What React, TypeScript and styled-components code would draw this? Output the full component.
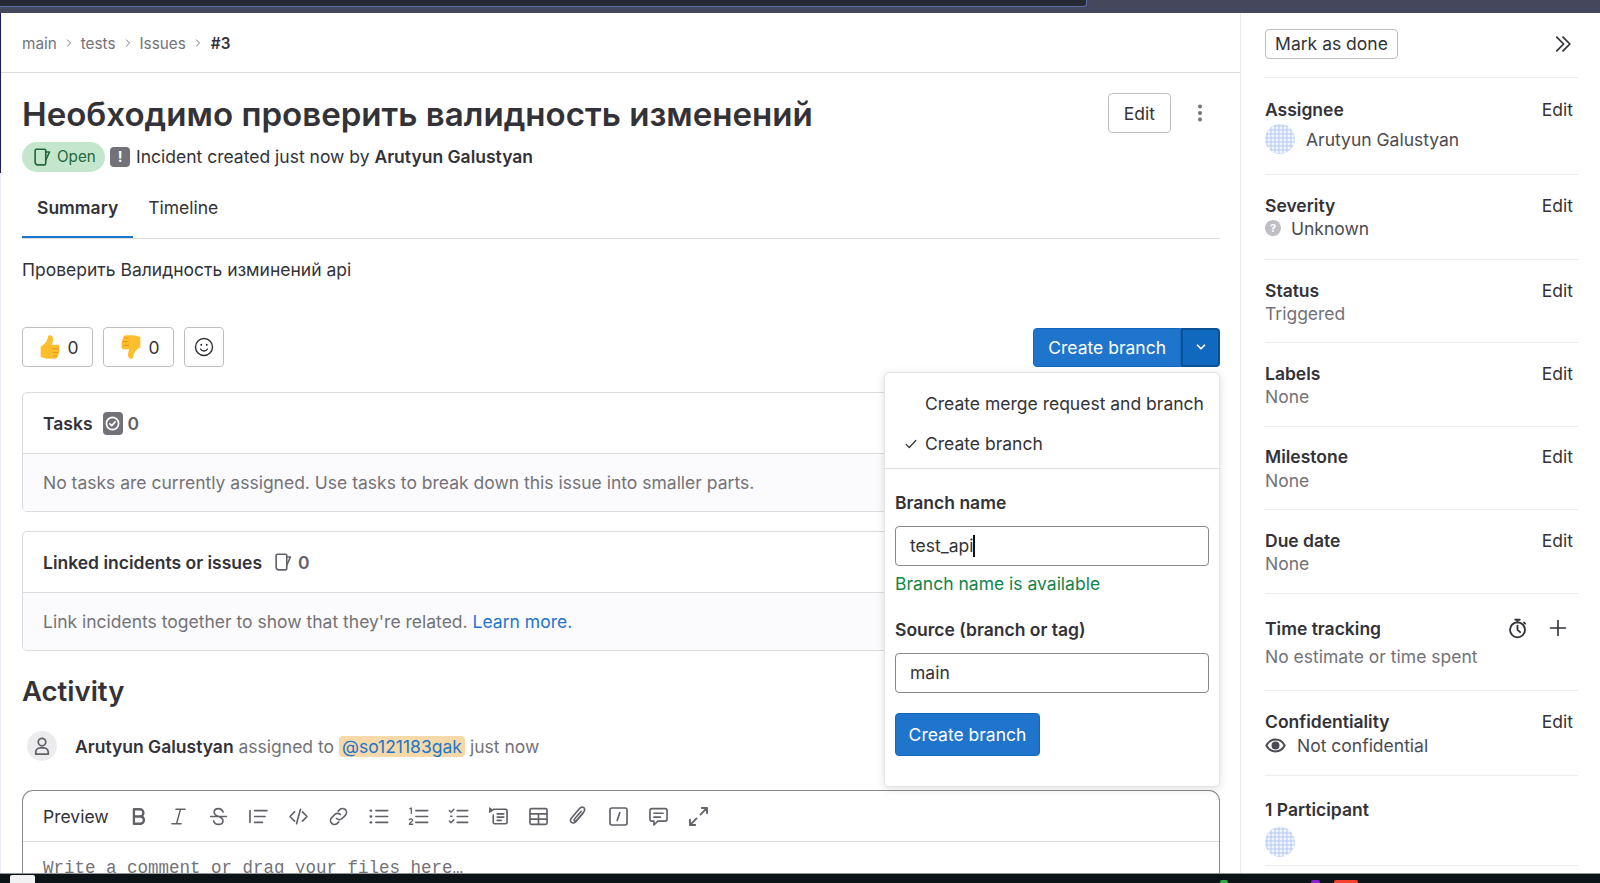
import React from "react";
import styled, { createGlobalStyle } from "styled-components";

const Global = createGlobalStyle`
  html, body { margin: 0; padding: 0; height: 100%; overflow: hidden; background: #fff; }
  #root { height: 100%; }
  * { box-sizing: border-box; }
  body { font-family: Inter, "Noto Sans", "Liberation Sans", sans-serif; font-size: 17.5px; color: #333238; }
`;

const Screen = styled.div`
  height: 883px; width: 1600px; display: flex; flex-direction: column; overflow: hidden;
`;
const TopStrip = styled.div`
  height: 13px; flex: none; background: #45485c;
`;
const TopTab = styled.div`
  width: 1087px; height: 7px; background: #262833;
  border-bottom: 1px solid #5a70ab; border-right: 1px solid #5a70ab; border-bottom-right-radius: 4px;
`;
const Body = styled.div`
  flex: 1; min-height: 0; display: flex; overflow: hidden;
`;
const Taskbar = styled.div`
  flex: none; height: 10px; background: #0b1316; border-top: 1px solid #8f9394;
  display: flex; align-items: flex-end;
`;
const TrayMark = styled.span<{ $w: number; $c: string; $ml: number; $h?: number }>`
  width: ${p => p.$w}px; height: ${p => p.$h ?? 3}px; margin-left: ${p => p.$ml}px; background: ${p => p.$c};
  border-radius: 2px 2px 0 0; flex: none;
`;

const Main = styled.main`
  position: relative; width: 1241px; flex: none; padding: 0 20px 0 21px;
  border-right: 1px solid #ececef; border-left: 1px solid #eaeaf8;
  &::before { content: ""; position: absolute; left: -1px; top: 0; width: 1px; height: 160px; background: #1e1d5e; }
`;
const Crumbs = styled.nav`
  height: 60px; margin: 0 -20px 0 -21px; padding: 1px 0 0 21px; border-bottom: 1px solid #dcdcde;
  display: flex; align-items: center; gap: 7px; font-size: 15.3px; color: #737278;
`;
const CrumbCurrent = styled.b`
  font-weight: 600; color: #333238; margin-left: 1px;
`;
const TitleRow = styled.div`
  margin-top: 20px; height: 40px; display: flex; align-items: center; justify-content: space-between;
`;
const Title = styled.h1`
  margin: 2px 0 0; font-size: 33.1px; line-height: 40px; font-weight: 600; color: #333238;
`;
const TitleActions = styled.div`
  display: flex; align-items: center; gap: 21px; padding-right: 12px;
`;
const Button = styled.button`
  font: inherit; font-size: 17.5px; color: #333238; background: #fff; border: 1px solid #bfbfc3; border-radius: 4px;
  height: 40px; padding: 0 15px; display: inline-flex; align-items: center; justify-content: center; gap: 8px;
`;
const StatusRow = styled.div`
  margin-top: 9px; height: 29px; display: flex; align-items: center;
`;
const Badge = styled.span`
  height: 30px; width: 83px; background: #c3e6cd; color: #24663b; border-radius: 15px; font-size: 15.2px;
  display: inline-flex; align-items: center; padding-left: 10px; gap: 5px;
`;
const AlertChip = styled.span`
  width: 20px; height: 20px; background: #737278; color: #fff; border-radius: 4px; font-weight: 700; font-size: 14px;
  display: inline-flex; align-items: center; justify-content: center; margin: 0 6px 0 5px;
`;
const Strong = styled.b`
  font-weight: 600; color: #333238;
`;
const Tabs = styled.div`
  margin-top: 5px; height: 63px; display: flex; border-bottom: 1px solid #dcdcde;
`;
const Tab = styled.div<{ $active?: boolean }>`
  padding: 0 15px; display: flex; align-items: center; height: 62px;
  font-weight: ${p => (p.$active ? 600 : 400)};
  box-shadow: ${p => (p.$active ? "inset 0 -2px 0 #1f75cb" : "none")};
`;
const Description = styled.p`
  margin: 19px 0 0; line-height: 24px;
`;
const ActionRow = styled.div`
  margin-top: 45px; height: 40px; display: flex; align-items: center; gap: 10px;
`;
const AwardButton = styled(Button)`
  width: 71px; padding: 0; gap: 3px;
`;
const SmileButton = styled(Button)`
  width: 40px; padding: 0;
`;
const SplitWrap = styled.div`
  margin-left: auto; position: relative; display: flex; height: 39px;
`;
const PrimaryButton = styled.button`
  font: inherit; font-size: 17.5px; color: #fff; background: #1f75cb; border: 1px solid #1068bf; height: 100%;
  padding: 0 14px; border-radius: 4px 0 0 4px;
`;
const CaretButton = styled.button`
  width: 39px; height: 100%; background: #1068bf; border: 2px solid #0b5196; border-radius: 0 4px 4px 0; color: #fff;
  display: flex; align-items: center; justify-content: center; padding: 0;
`;
const Menu = styled.div`
  position: absolute; top: 44px; right: 0; width: 336px; height: 415px; background: #fff; z-index: 2;
  border: 1px solid #e5e5e8; border-radius: 5px; box-shadow: 0 2px 8px rgba(0,0,0,.13);
`;
const MenuOptions = styled.div`
  height: 96px; padding-top: 11px; border-bottom: 1px solid #dcdcde;
`;
const MenuOption = styled.div`
  height: 40px; display: flex; align-items: center; padding-left: 40px; position: relative; white-space: nowrap;
`;
const MenuCheck = styled.span`
  position: absolute; left: 19px; top: 13px; display: flex;
`;
const MenuForm = styled.div`
  padding: 22px 10px 0;
`;
const FieldLabel = styled.div`
  font-weight: 600; line-height: 24px;
`;
const TextField = styled.div`
  margin-top: 11px; height: 40px; border: 1px solid #89888d; border-radius: 4px; padding: 0 14px;
  display: flex; align-items: center;
`;
const Caret = styled.span`
  display: inline-block; width: 1.5px; height: 22px; background: #111;
`;
const Available = styled.div`
  margin-top: 6px; color: #108548; line-height: 24px; margin-bottom: 22px;
`;
const MenuSubmit = styled.button`
  margin-top: 20px; font: inherit; font-size: 17.5px; color: #fff; background: #1f75cb; border: 1px solid #1068bf;
  height: 43px; width: 145px; border-radius: 4px; padding: 0;
`;
const Card = styled.section<{ $gap: number }>`
  margin-top: ${p => p.$gap}px; border: 1px solid #dcdcde; border-radius: 5px; overflow: hidden;
`;
const CardHead = styled.div`
  height: 61px; padding-left: 20px; display: flex; align-items: center; font-weight: 600; color: #333238;
  border-bottom: 1px solid #dcdcde;
`;
const CardCount = styled.span<{ $gap: number }>`
  display: inline-flex; align-items: center; gap: 5px; margin-left: ${p => p.$gap}px; color: #626168;
`;
const CardBody = styled.div`
  height: 57px; padding-left: 20px; display: flex; align-items: center; background: #fbfafd; color: #737278;
`;
const Link = styled.a`
  color: #1f75cb; margin-left: 5px;
`;
const TaskIconChip = styled.span`
  width: 20px; height: 23px; background: #737278; border-radius: 4px; display: inline-flex; align-items: center; justify-content: center;
`;
const ActivityTitle = styled.h2`
  margin: 19px 0 0; height: 42px; line-height: 42px; font-size: 27.5px; font-weight: 600; color: #333238;
`;
const Note = styled.div`
  margin-top: 19px; height: 30px; padding-left: 5px; display: flex; align-items: center; color: #737278;
`;
const NoteAvatar = styled.span`
  width: 30px; height: 30px; border-radius: 50%; background: #ececef; display: flex; align-items: center; justify-content: center;
  margin-right: 18px; color: #626168;
`;
const Mention = styled.span`
  background: #f5d9a8; color: #1f75cb; border-radius: 4px; padding: 0 3px; margin: 0 5px;
`;
const Editor = styled.section`
  margin-top: 29px; height: 120px; border: 1px solid #89888d; border-bottom: 0; border-radius: 11px 11px 0 0;
`;
const Toolbar = styled.div`
  height: 51px; padding: 0 0 0 20px; border-bottom: 1px solid #dcdcde; display: flex; align-items: center; color: #626168;
`;
const PreviewLabel = styled.span`
  color: #333238; width: 85px;
`;
const ToolIcon = styled.span`
  width: 20px; height: 20px; margin-right: 20px; display: flex; align-items: center; justify-content: center;
`;
const Placeholder = styled.div`
  padding: 14px 0 0 20px; font-family: "Liberation Mono", monospace; font-size: 17.5px; line-height: 24px; color: #737278;
`;

const Sidebar = styled.aside`
  flex: 1; padding: 0 22px 0 24px;
`;
const SideTop = styled.div`
  height: 65px; display: flex; align-items: center; justify-content: space-between; padding: 0 5px 3px 0;
  border-bottom: 1px solid #ececef;
`;
const MarkDone = styled(Button)`
  height: 30px; padding: 0; width: 133px; white-space: nowrap;
`;
const SideSection = styled.section<{ $h: number; $pt?: number }>`
  height: ${p => p.$h}px; padding-top: ${p => p.$pt ?? 18}px; border-bottom: 1px solid #ececef;
`;
const SideHead = styled.div`
  height: 24px; display: flex; align-items: center; justify-content: space-between; font-weight: 600; padding-right: 5px;
`;
const EditLink = styled.span`
  font-weight: 400;
`;
const SideValue = styled.div<{ $muted?: boolean; $gap?: number }>`
  display: flex; align-items: center; height: 24px; margin-top: -1px; gap: ${p => p.$gap ?? 10}px;
  color: ${p => (p.$muted ? "#737278" : "#4c4b51")};
`;
const LooseValue = styled(SideValue)`
  margin-top: 0;
`;
const AssigneeRow = styled(SideValue)`
  height: 32px; margin-top: 2px;
`;
const TimeHead = styled(SideHead)`
  height: 32px; padding-right: 10px;
`;
const TimeIcons = styled.span`
  display: flex; gap: 20px; color: #333238;
`;
const HelpDot = styled.span`
  width: 16px; height: 16px; border-radius: 50%; background: #bfbfc3; color: #fff; font-size: 11px; font-weight: 700;
  display: flex; align-items: center; justify-content: center;
`;
const ParticipantRow = styled.div`
  margin-top: 6px;
`;

const Svg: React.FC<{ size?: number; children: React.ReactNode; sw?: number }> = ({ size = 16, children, sw = 1.5 }) => (
  <svg width={size} height={size} viewBox="0 0 16 16" fill="none" stroke="currentColor" strokeWidth={sw} strokeLinecap="round" strokeLinejoin="round" style={{ display: "block", flex: "none" }}>
    {children}
  </svg>
);

const Tool: React.FC<{ children: React.ReactNode; sw?: number }> = ({ children, sw = 1.25 }) => (
  <Svg size={21} sw={sw}>{children}</Svg>
);

const Cup: React.FC<{ size?: number }> = ({ size = 20 }) => (
  <Svg size={size} sw={1.3}>
    <path d="M3.500 1.750h6.500a1 1 0 0 1 1 1v10.500a1 1 0 0 1-1 1H4.500a2 2 0 0 1-2-2V2.750a1 1 0 0 1 1-1z" />
    <path d="M11 4h3l-3 6.500" />
  </Svg>
);

const Chevron = () => (
  <Svg size={10}><path d="M5.500 3l5 5-5 5" /></Svg>
);

const Thumb: React.FC<{ down?: boolean }> = ({ down }) => (
  <svg width="28" height="28" viewBox="0 0 24 24" style={{ display: "block", flex: "none", transform: down ? "scale(-1,-1)" : undefined }}>
    <path d="M4 11.500c2.500-1 4.500-3 5.500-5.500l.8-3c.5-1.800 3.700-1.500 4.200 1 .3 2-.4 4-.9 6h4.900c1.700 0 2.200 2.200 1 3.200 1.100 1 .9 2.600-.2 3.200.6 1.100.3 2.500-.9 3.100.3 1.300-.5 2.500-2 2.500h-6.400c-2.200 0-3.500-1-6-1.500z" fill="#fdbe2e" />
    <path d="M14 13.500h5M14.500 16.700h4.500M15 19.700h3" stroke="#e69a12" strokeWidth="1" fill="none" strokeLinecap="round" />
  </svg>
);

const Identicon: React.FC<{ id: string }> = ({ id }) => (
  <svg width="30" height="30" viewBox="0 0 30 30" style={{ display: "block", flex: "none" }}>
    <defs>
      <pattern id={id} width="4" height="4" patternUnits="userSpaceOnUse">
        <rect width="4" height="4" fill="#f4f7fe" />
        <path d="M2 0v4M0 2h4" stroke="#b4c9f1" strokeWidth="1" />
        <rect x="0.3" y="0.3" width="0.9" height="0.9" fill="#d6e1f8" />
      </pattern>
    </defs>
    <circle cx="15" cy="15" r="15" fill={`url(#${id})`} />
  </svg>
);

const toolbarIcons: React.ReactNode[] = [
  <Tool sw={1.8}><path d="M4.500 2.500h4.500a2.700 2.700 0 0 1 0 5.500H4.500zM4.500 8h5.300a2.800 2.800 0 0 1 0 5.500H4.500z" /></Tool>,
  <Tool sw={1.1}><path d="M6 2.500h7M3 13.500h7M9.500 2.500l-3 11" /></Tool>,
  <Tool><path d="M2 8h12M11.500 4.500C11 3 9.700 2 8 2 6 2 4.700 3.200 4.700 4.800 4.700 6.300 5.800 7.200 8 8c2.300.8 3.400 1.700 3.400 3.200C11.400 13 10 14 8 14c-1.800 0-3.200-1-3.700-2.600" /></Tool>,
  <Tool><path d="M1.500 3.500v9M5 3.500h9.500M5 8h8M5 12.500h6" /></Tool>,
  <Tool><path d="M5 4.500L1.500 8 5 11.500M11 4.500L14.500 8 11 11.500M9.500 2.500l-3 11" /></Tool>,
  <Tool><path d="M6.500 9.500a3 3 0 0 0 4.300 0l2.400-2.400a3 3 0 0 0-4.300-4.300L7.800 3.900M9.500 6.500a3 3 0 0 0-4.300 0L2.800 8.900a3 3 0 0 0 4.300 4.300l1.100-1.100" /></Tool>,
  <Tool><path d="M6 3.500h9M6 8h9M6 12.500h9" /><path d="M2 3.500h.4M2 8h.4M2 12.500h.4" strokeWidth="1.800" /></Tool>,
  <Tool><path d="M6 3.500h9M6 8h9M6 12.500h9" /><path d="M1.500 2L2.500 1.500V5.500M1 10.500c.5-1 2.500-.8 2.500.4 0 1-2.500 1.600-2.500 3h2.600" strokeWidth="1" /></Tool>,
  <Tool><path d="M7 3.500h8M7 8h8M7 12.500h8" /><path d="M1 3.500l1.300 1.300L4.500 2.500M1 11.500l1.300 1.300 2.200-2.300" strokeWidth="1.100" /><path d="M2 7.800h1" /></Tool>,
  <Tool><path d="M4 2.500h9.500a1 1 0 0 1 1 1v9a1 1 0 0 1-1 1H5a1 1 0 0 1-1-1V7" /><path d="M7 6h5M7 8.500h5M7 11h3" /><path d="M0.800 0.800L4.500 3.200 0.800 5.600z" fill="currentColor" stroke="none" /></Tool>,
  <Tool><rect x="1.500" y="2" width="13" height="12" rx="1" /><path d="M1.500 6h13M1.500 10h13M8 6v8" /></Tool>,
  <Tool><path d="M11.500 5.500L6 12c-1 1.200-2.600 1.200-3.400.4-.9-.8-.8-2.300.2-3.500l6-7c1-1.100 2.300-1.300 3.200-.6.9.8.9 2 0 3.200L6.500 11c-.5.6-1.200.7-1.600.3-.4-.4-.3-1 .2-1.600l5-5.700" /></Tool>,
  <Tool><rect x="1.500" y="1.500" width="13" height="13" rx="1.500" /><path d="M9 5l-2 6" /></Tool>,
  <Tool><path d="M3 2h10a1.500 1.500 0 0 1 1.500 1.500v6.500a1.500 1.500 0 0 1-1.500 1.500H7.500L4.500 14.500v-3H3A1.500 1.500 0 0 1 1.500 10V3.500A1.500 1.500 0 0 1 3 2z" /><path d="M4.500 5.500h7M4.500 8.500h5" /></Tool>,
  <Tool sw={1.4}><path d="M9.500 6.500L14.500 1.500M10.500 1.500h4v4M6.500 9.500L1.500 14.500M1.500 10.500v4h4" /></Tool>,
];

export default function App() {
  return (
    <Screen>
      <Global />
      <TopStrip><TopTab /></TopStrip>
      <Body>
        <Main>
          <Crumbs>
            <span>main</span><Chevron /><span>tests</span><Chevron /><span>Issues</span><Chevron /><CrumbCurrent>#3</CrumbCurrent>
          </Crumbs>
          <TitleRow>
            <Title>Необходимо проверить валидность изменений</Title>
            <TitleActions>
              <Button>Edit</Button>
              <svg width="16" height="20" viewBox="0 0 16 20" fill="#737278" style={{ display: "block" }}>
                <circle cx="8" cy="3.500" r="2" /><circle cx="8" cy="10" r="2" /><circle cx="8" cy="16.500" r="2" />
              </svg>
            </TitleActions>
          </TitleRow>
          <StatusRow>
            <Badge><Cup /> Open</Badge>
            <AlertChip>!</AlertChip>
            <span>Incident created just now by <Strong>Arutyun Galustyan</Strong></span>
          </StatusRow>
          <Tabs>
            <Tab $active>Summary</Tab>
            <Tab>Timeline</Tab>
          </Tabs>
          <Description>Проверить Валидность изминений api</Description>
          <ActionRow>
            <AwardButton><Thumb /> 0</AwardButton>
            <AwardButton><Thumb down /> 0</AwardButton>
            <SmileButton>
              <Svg size={20} sw={1.1}><circle cx="8" cy="8" r="6.800" /><path d="M5.200 9.600c.6 1.100 1.600 1.600 2.800 1.600s2.200-.5 2.800-1.600" /><path d="M5.800 6.200v.1M10.200 6.200v.1" strokeWidth="1.500" /></Svg>
            </SmileButton>
            <SplitWrap>
              <PrimaryButton>Create branch</PrimaryButton>
              <CaretButton><Svg size={14} sw={2}><path d="M4 6l4 4 4-4" /></Svg></CaretButton>
              <Menu>
                <MenuOptions>
                  <MenuOption>Create merge request and branch</MenuOption>
                  <MenuOption>
                    <MenuCheck><Svg size={14} sw={1.4}><path d="M2.500 8.500l3.500 3.500 7.500-8" /></Svg></MenuCheck>
                    Create branch
                  </MenuOption>
                </MenuOptions>
                <MenuForm>
                  <FieldLabel>Branch name</FieldLabel>
                  <TextField>test_api<Caret /></TextField>
                  <Available>Branch name is available</Available>
                  <FieldLabel>Source (branch or tag)</FieldLabel>
                  <TextField>main</TextField>
                  <MenuSubmit>Create branch</MenuSubmit>
                </MenuForm>
              </Menu>
            </SplitWrap>
          </ActionRow>
          <Card $gap={25}>
            <CardHead>
              Tasks
              <CardCount $gap={10}>
                <TaskIconChip>
                  <svg width="15" height="15" viewBox="0 0 16 16" fill="none" stroke="#fff" strokeWidth="1.800" strokeLinecap="round" strokeLinejoin="round">
                    <circle cx="8" cy="8" r="6.500" /><path d="M5.200 8.300l2 2 3.600-4" />
                  </svg>
                </TaskIconChip>
                0
              </CardCount>
            </CardHead>
            <CardBody>No tasks are currently assigned. Use tasks to break down this issue into smaller parts.</CardBody>
          </Card>
          <Card $gap={19}>
            <CardHead>
              Linked incidents or issues
              <CardCount $gap={11}><Cup /> 0</CardCount>
            </CardHead>
            <CardBody>Link incidents together to show that they're related.<Link>Learn more.</Link></CardBody>
          </Card>
          <ActivityTitle>Activity</ActivityTitle>
          <Note>
            <NoteAvatar>
              <Svg size={20} sw={1.4}><circle cx="8" cy="4.800" r="3" /><path d="M3 14.500h10v-1.500a3.500 3.500 0 0 0-3.500-3.500h-3A3.500 3.500 0 0 0 3 13z" /></Svg>
            </NoteAvatar>
            <Strong>Arutyun Galustyan</Strong>&nbsp;assigned to
            <Mention>@so121183gak</Mention>just now
          </Note>
          <Editor>
            <Toolbar>
              <PreviewLabel>Preview</PreviewLabel>
              {toolbarIcons.map((icon, i) => <ToolIcon key={i}>{icon}</ToolIcon>)}
            </Toolbar>
            <Placeholder>Write a comment or drag your files here…</Placeholder>
          </Editor>
        </Main>
        <Sidebar>
          <SideTop>
            <MarkDone>Mark as done</MarkDone>
            <Svg size={20} sw={1.4}><path d="M3 2.500L8.500 8 3 13.500M8 2.500L13.500 8 8 13.500" /></Svg>
          </SideTop>
          <SideSection $h={97} $pt={19}>
            <SideHead>Assignee<EditLink>Edit</EditLink></SideHead>
            <AssigneeRow $gap={11}><Identicon id="ida" /><span>Arutyun Galustyan</span></AssigneeRow>
          </SideSection>
          <SideSection $h={85}>
            <SideHead>Severity<EditLink>Edit</EditLink></SideHead>
            <SideValue><HelpDot>?</HelpDot>Unknown</SideValue>
          </SideSection>
          <SideSection $h={83}>
            <SideHead>Status<EditLink>Edit</EditLink></SideHead>
            <SideValue $muted>Triggered</SideValue>
          </SideSection>
          <SideSection $h={84}>
            <SideHead>Labels<EditLink>Edit</EditLink></SideHead>
            <SideValue $muted>None</SideValue>
          </SideSection>
          <SideSection $h={83} $pt={17}>
            <SideHead>Milestone<EditLink>Edit</EditLink></SideHead>
            <LooseValue $muted>None</LooseValue>
          </SideSection>
          <SideSection $h={84}>
            <SideHead>Due date<EditLink>Edit</EditLink></SideHead>
            <SideValue $muted>None</SideValue>
          </SideSection>
          <SideSection $h={97}>
            <TimeHead>
              Time tracking
              <TimeIcons>
                <Svg size={21} sw={1.4}><circle cx="8" cy="9" r="5.700" /><path d="M8 5.800V9l2 1.800M6.300 1.300h3.400M8 1.300v2" /><path d="M13 3.500l.8.8" /></Svg>
                <Svg size={20} sw={1.3}><path d="M8 2v12M2 8h12" /></Svg>
              </TimeIcons>
            </TimeHead>
            <LooseValue $muted>No estimate or time spent</LooseValue>
          </SideSection>
          <SideSection $h={85}>
            <SideHead>Confidentiality<EditLink>Edit</EditLink></SideHead>
            <LooseValue $gap={11}>
              <Svg size={21} sw={1.500}><path d="M1 8c1.600-3 4-4.500 7-4.500S13.400 5 15 8c-1.600 3-4 4.500-7 4.500S2.600 11 1 8z" /><circle cx="8" cy="8" r="2.300" fill="currentColor" /></Svg>
              Not confidential
            </LooseValue>
          </SideSection>
          <SideSection $h={90} $pt={21}>
            <SideHead>1 Participant</SideHead>
            <ParticipantRow><Identicon id="idb" /></ParticipantRow>
          </SideSection>
        </Sidebar>
      </Body>
      <Taskbar>
        <TrayMark $w={25} $h={8} $c="#f2f2f2" $ml={10} />
        <TrayMark $w={8} $c="#2faa4a" $ml={1185} />
        <TrayMark $w={9} $c="#8a1fd0" $ml={83} />
        <TrayMark $w={24} $c="#f4422e" $ml={14} />
      </Taskbar>
    </Screen>
  );
}
